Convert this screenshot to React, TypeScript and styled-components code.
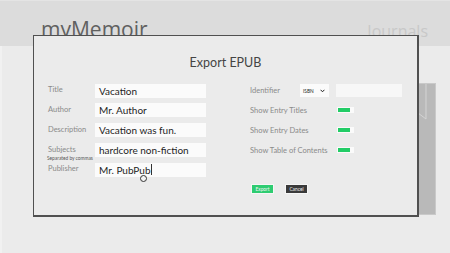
import React from 'react';
import styled, { createGlobalStyle } from 'styled-components';

const GlobalStyle = createGlobalStyle`
  html, body {
    margin: 0;
    padding: 0;
    width: 450px;
    height: 253px;
    overflow: hidden;
    background: #ebebeb;
  }
  * {
    box-sizing: border-box;
  }
`;

const leftRows = [
  { label: 'Title', value: 'Vacation' },
  { label: 'Author', value: 'Mr. Author' },
  { label: 'Description', value: 'Vacation was fun.' },
  { label: 'Subjects', value: 'hardcore non-fiction', hint: 'Separated by commas' },
  { label: 'Publisher', value: 'Mr. PubPub', caret: true },
];

const toggles = ['Show Entry Titles', 'Show Entry Dates', 'Show Table of Contents'];

const App = () => {
  return (
    <Page>
      <GlobalStyle />
      <Header>
        <AppTitle>myMemoir</AppTitle>
        <NavLink>Journals</NavLink>
      </Header>
      <Main>
        <SidePanel>
          <svg width="60" height="132" viewBox="0 0 60 132">
            <path d="M50 0 V36 L42 30" stroke="#d4d4d4" strokeWidth="1" fill="none" />
          </svg>
        </SidePanel>
      </Main>

      <Dialog>
        <DialogTitle>Export EPUB</DialogTitle>
        <Columns>
          <FormGrid>
            {leftRows.map((row) => (
              <React.Fragment key={row.label}>
                <LabelCell $hinted={!!row.hint}>
                  <Label>{row.label}</Label>
                  {row.hint && <Hint>{row.hint}</Hint>}
                </LabelCell>
                <Field>
                  {row.value}
                  {row.caret && <Caret />}
                </Field>
              </React.Fragment>
            ))}
          </FormGrid>
          <RightCol>
            <RightGrid>
              <LabelCell>
                <Label>Identifier</Label>
              </LabelCell>
              <IdentifierControls>
                <Select>
                  <span>ISBN</span>
                  <svg width="5" height="4" viewBox="0 0 5 4">
                    <path d="M0.6 0.8 L2.5 2.8 L4.4 0.8" stroke="#222" strokeWidth="1" fill="none" />
                  </svg>
                </Select>
                <SmallField />
              </IdentifierControls>
              {toggles.map((t) => (
                <React.Fragment key={t}>
                  <LabelCell>
                    <Label>{t}</Label>
                  </LabelCell>
                  <ToggleCell>
                    <Toggle>
                      <ToggleFill />
                    </Toggle>
                  </ToggleCell>
                </React.Fragment>
              ))}
            </RightGrid>
            <Buttons>
              <Button $variant="primary">Export</Button>
              <Button $variant="dark">Cancel</Button>
            </Buttons>
          </RightCol>
        </Columns>
      </Dialog>

      <Pointer />
    </Page>
  );
};

export default App;

const Page = styled.div`
  position: relative;
  width: 450px;
  height: 253px;
  background: #ebebeb;
  box-shadow: inset 2px 0 0 #f1f1f1;
  font-family: Lato, 'Open Sans', sans-serif;
  display: flex;
  flex-direction: column;
`;

const Header = styled.div`
  height: 46px;
  background: #dcdcdc;
  border-top: 1px solid #e4e4e4;
  display: flex;
  align-items: flex-start;
  justify-content: space-between;
  padding: 0 22px 0 41px;
`;

const AppTitle = styled.div`
  font-family: 'Open Sans', sans-serif;
  font-size: 21px;
  font-weight: 400;
  color: #606060;
  line-height: 1;
  margin-top: 18px;
`;

const NavLink = styled.div`
  font-family: 'Open Sans', sans-serif;
  font-size: 16px;
  font-weight: 400;
  color: #c8c8c8;
  line-height: 1;
  margin-top: 22px;
`;

const Main = styled.div`
  flex: 1;
  display: flex;
  justify-content: flex-end;
  padding: 37px 14px 0 0;
`;

const SidePanel = styled.div`
  width: 60px;
  height: 132px;
  background: #b9b9b9;
  border: 1px solid #c9c9c9;
  overflow: hidden;
  svg {
    display: block;
    margin: -1px 0 0 -1px;
  }
`;

const Dialog = styled.div`
  position: absolute;
  left: 33px;
  top: 35px;
  width: 386px;
  height: 182px;
  background: #ebebeb;
  border: 1px solid #505050;
  border-right-width: 2px;
  border-bottom-width: 2px;
  padding: 0 0 0 14px;
`;

const DialogTitle = styled.div`
  text-align: center;
  font-size: 12.5px;
  color: #444;
  line-height: 1;
  margin: 21px 0 0 -14px;
`;

const Columns = styled.div`
  display: flex;
  margin-top: 14px;
`;

const FormGrid = styled.div`
  display: grid;
  grid-template-columns: 47px 111px;
  grid-auto-rows: 14px;
  row-gap: 5.75px;
`;

const RightCol = styled.div`
  margin-left: 44px;
  display: flex;
  flex-direction: column;
`;

const RightGrid = styled.div`
  display: grid;
  grid-template-columns: 50px 103px;
  grid-auto-rows: 14px;
  row-gap: 5.75px;
  align-items: center;
`;

const LabelCell = styled.div<{ $hinted?: boolean }>`
  display: flex;
  flex-direction: column;
  padding-top: ${(p) => (p.$hinted ? '2.5px' : '1.5px')};
  white-space: nowrap;
`;

const Label = styled.div`
  font-size: 7.5px;
  line-height: 10px;
  color: #8a8a8a;
`;

const Hint = styled.div`
  font-size: 4.8px;
  line-height: 6px;
  color: #555;
  margin-left: -1px;
`;

const Field = styled.div`
  height: 14px;
  background: #fbfbfb;
  color: #1e1e1e;
  font-size: 10px;
  line-height: 14px;
  padding-left: 4px;
  white-space: nowrap;
  display: flex;
  align-items: center;
`;

const Caret = styled.span`
  display: inline-block;
  width: 1px;
  height: 11px;
  background: #333;
  margin-left: 0.5px;
`;

const IdentifierControls = styled.div`
  display: flex;
  align-items: center;
  gap: 7px;
  height: 14px;
`;

const Select = styled.div`
  width: 29px;
  height: 13px;
  background: #fbfbfb;
  display: flex;
  align-items: center;
  justify-content: space-between;
  padding: 0 4px 0 3px;
  font-size: 4.8px;
  color: #222;
`;

const SmallField = styled.div`
  width: 66px;
  height: 13px;
  background: #f7f7f7;
`;

const ToggleCell = styled.div`
  display: flex;
  align-items: center;
  padding-left: 37px;
`;

const Toggle = styled.div`
  width: 17px;
  height: 6px;
  background: #fafafa;
  padding: 1px;
`;

const ToggleFill = styled.div`
  width: 12px;
  height: 4px;
  background: #22cc66;
`;

const Buttons = styled.div`
  display: flex;
  gap: 11px;
  margin-top: 27px;
  margin-left: 1px;
`;

const Button = styled.div<{ $variant: 'primary' | 'dark' }>`
  width: 23px;
  height: 10px;
  border: 1px solid #f6f6f6;
  background: ${(p) => (p.$variant === 'primary' ? '#2ecc71' : '#3a3a3a')};
  color: #f4f4f4;
  font-size: 4.8px;
  display: flex;
  align-items: center;
  justify-content: center;
`;

const Pointer = styled.div`
  position: absolute;
  left: 139.5px;
  top: 175px;
  width: 7px;
  height: 7px;
  border: 1.5px solid #333;
  border-radius: 50%;
  background: #f4f4f4;
`;
